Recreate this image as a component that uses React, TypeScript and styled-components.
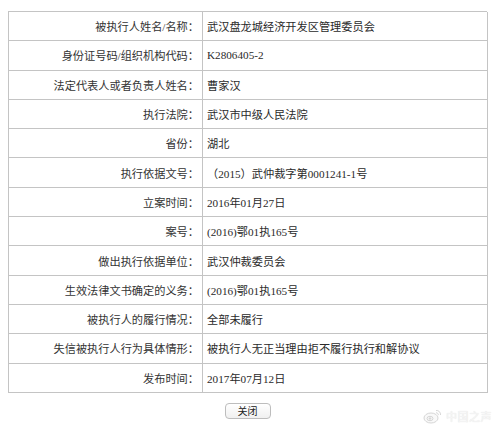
import React from "react";
import styled, { createGlobalStyle } from "styled-components";

const Global = createGlobalStyle`
  html, body { margin: 0; padding: 0; background: #fff; }
  body { width: 500px; height: 432px; overflow: hidden; position: relative; }
`;

const Page = styled.div`
  position: relative;
  width: 500px;
  height: 432px;
  padding: 11px 0 0 8px;
  box-sizing: border-box;
  font-family: "Liberation Serif", "Noto Sans CJK SC", serif;
  color: #2a2a2a;
`;

const Table = styled.div`
  display: grid;
  grid-template-columns: 194px 285px;
  grid-auto-rows: 29.3px;
  width: 479px;
  border-top: 1px solid #c4c4c4;
  border-left: 1px solid #c4c4c4;
  box-sizing: border-box;
`;

const Cell = styled.div<{ $label?: boolean }>`
  display: flex;
  align-items: center;
  justify-content: ${(p) => (p.$label ? "flex-end" : "flex-start")};
  padding: ${(p) => (p.$label ? "0 3px 0 0" : "0 0 0 4px")};
  border-right: 1px solid #c4c4c4;
  border-bottom: 1px solid #c4c4c4;
  box-sizing: border-box;
  font-size: 11.2px;
  white-space: nowrap;
  color: ${(p) => (p.$label ? "#333" : "#2a2a2a")};
`;

const Footer = styled.div`
  display: flex;
  justify-content: center;
  width: 479px;
  margin-top: 10px;
`;

const Button = styled.button`
  width: 46px;
  height: 16px;
  padding: 0;
  border: 1px solid #bdbdbd;
  border-radius: 4px;
  background: linear-gradient(#ffffff, #f0f0f0);
  font-family: "Noto Sans CJK SC", sans-serif;
  font-size: 10px;
  line-height: 14px;
  color: #222;
`;

const Watermark = styled.div`
  position: absolute;
  right: 8px;
  bottom: 8px;
  display: flex;
  align-items: center;
  gap: 3px;
  font-family: "Noto Sans CJK SC", sans-serif;
  font-size: 11px;
  color: #f6f6f6;
  text-shadow: 0 0 1px #d8d8d8;
  letter-spacing: 0.5px;
`;

const rows: [string, string][] = [
  ["被执行人姓名/名称：", "武汉盘龙城经济开发区管理委员会"],
  ["身份证号码/组织机构代码：", "K2806405-2"],
  ["法定代表人或者负责人姓名：", "曹家汉"],
  ["执行法院：", "武汉市中级人民法院"],
  ["省份：", "湖北"],
  ["执行依据文号：", "（2015）武仲裁字第0001241-1号"],
  ["立案时间：", "2016年01月27日"],
  ["案号：", "(2016)鄂01执165号"],
  ["做出执行依据单位：", "武汉仲裁委员会"],
  ["生效法律文书确定的义务：", "(2016)鄂01执165号"],
  ["被执行人的履行情况：", "全部未履行"],
  ["失信被执行人行为具体情形：", "被执行人无正当理由拒不履行执行和解协议"],
  ["发布时间：", "2017年07月12日"],
];

const WeiboLogo = () => (
  <svg width="20" height="16" viewBox="0 0 20 16" fill="none" stroke="#d6d6d6" strokeWidth="1">
    <ellipse cx="8" cy="10" rx="7" ry="5" fill="#f9f9f9" />
    <ellipse cx="7" cy="10.5" rx="3" ry="2.2" />
    <circle cx="7" cy="10.5" r="0.8" fill="#d6d6d6" />
    <path d="M13 2.5a4 4 0 0 1 4.5 4.5" />
    <path d="M13 4.8a2 2 0 0 1 2.3 2.3" />
  </svg>
);

export default function App() {
  return (
    <>
      <Global />
      <Page>
        <Table>
          {rows.map(([k, v]) => (
            <React.Fragment key={k}>
              <Cell $label>{k}</Cell>
              <Cell>{v}</Cell>
            </React.Fragment>
          ))}
        </Table>
        <Footer>
          <Button>关闭</Button>
        </Footer>
        <Watermark>
          <WeiboLogo />
          <span>中国之声</span>
        </Watermark>
      </Page>
    </>
  );
}
